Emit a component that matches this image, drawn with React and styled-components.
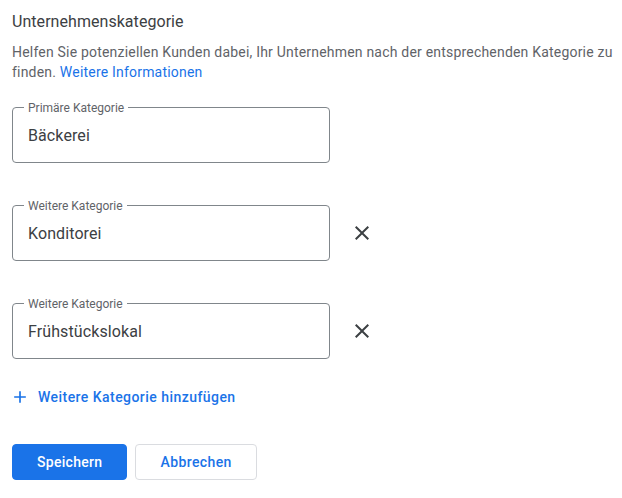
import React, { useState } from "react";
import styled, { createGlobalStyle } from "styled-components";

const GlobalStyle = createGlobalStyle`
  body {
    margin: 0;
    background: #fff;
    font-family: Roboto, "Liberation Sans", Arial, sans-serif;
  }
`;

const Page = styled.div`
  padding: 10px 4px 0 12px;
  color: #3c4043;
`;

const Title = styled.h2`
  margin: 0;
  font-size: 16px;
  line-height: 24px;
  font-weight: 400;
  letter-spacing: 0.05px;
  color: #3c4043;
`;

const Description = styled.p`
  margin: 8px 0 0;
  font-size: 14px;
  line-height: 20px;
  letter-spacing: 0.2px;
  color: #5f6368;

  a {
    color: #1a73e8;
    text-decoration: none;
  }
`;

const FieldList = styled.div`
  display: flex;
  flex-direction: column;
  gap: 42px;
  margin-top: 25px;
`;

const Row = styled.div`
  display: flex;
  align-items: center;
  gap: 20px;
`;

const Field = styled.div`
  position: relative;
  box-sizing: border-box;
  width: 318px;
  height: 56px;
  padding: 0 15px;
  display: flex;
  align-items: center;
  border: 1px solid #80868b;
  border-radius: 4px;
  font-size: 16px;
  letter-spacing: 0.1px;
  color: #3c4043;
`;

const FieldLabel = styled.span`
  position: absolute;
  top: -8px;
  left: 11px;
  padding: 0 4px;
  background: #fff;
  font-size: 12px;
  line-height: 16px;
  letter-spacing: 0;
  color: #5f6368;
`;

const RemoveButton = styled.button`
  width: 24px;
  height: 24px;
  padding: 0;
  border: none;
  background: none;
  display: flex;
  align-items: center;
  justify-content: center;
  color: #3c4043;
  cursor: pointer;
`;

const AddLink = styled.button`
  margin-top: 28px;
  margin-left: -2px;
  padding: 0;
  border: none;
  background: none;
  display: flex;
  align-items: center;
  gap: 8px;
  font-family: inherit;
  font-size: 14px;
  line-height: 20px;
  font-weight: 500;
  letter-spacing: 0.45px;
  color: #1a73e8;
  cursor: pointer;
`;

const Actions = styled.div`
  display: flex;
  gap: 8px;
  margin-top: 37px;
`;

const Button = styled.button`
  box-sizing: border-box;
  height: 36px;
  padding: 0 24px;
  border-radius: 4px;
  font-family: inherit;
  font-size: 14px;
  font-weight: 500;
  letter-spacing: ${(p) => (p.$primary ? "0.3px" : "0.4px")};
  cursor: pointer;
  border: 1px solid ${(p) => (p.$primary ? "#1a73e8" : "#dadce0")};
  background: ${(p) => (p.$primary ? "#1a73e8" : "#fff")};
  color: ${(p) => (p.$primary ? "#fff" : "#1a73e8")};
`;

const CloseIcon = () => (
  <svg width="24" height="24" viewBox="0 0 24 24" fill="currentColor">
    <path d="M19 6.41L17.59 5 12 10.59 6.41 5 5 6.41 10.59 12 5 17.59 6.41 19 12 13.41 17.59 19 19 17.59 13.41 12z" />
  </svg>
);

const AddIcon = () => (
  <svg width="20" height="20" viewBox="0 0 24 24" fill="currentColor">
    <path d="M19 13h-6v6h-2v-6H5v-2h6V5h2v6h6v2z" />
  </svg>
);

const App = () => {
  const [extra, setExtra] = useState(["Konditorei", "Frühstückslokal"]);

  return (
    <>
      <GlobalStyle />
      <Page>
        <Title>Unternehmenskategorie</Title>
        <Description>
          Helfen Sie potenziellen Kunden dabei, Ihr Unternehmen nach der
          entsprechenden Kategorie zu finden.{" "}
          <a href="#">Weitere Informationen</a>
        </Description>

        <FieldList>
          <Row>
            <Field>
              <FieldLabel>Primäre Kategorie</FieldLabel>
              Bäckerei
            </Field>
          </Row>
          {extra.map((name, i) => (
            <Row key={name}>
              <Field>
                <FieldLabel>Weitere Kategorie</FieldLabel>
                {name}
              </Field>
              <RemoveButton
                aria-label="Entfernen"
                onClick={() => setExtra(extra.filter((_, j) => j !== i))}
              >
                <CloseIcon />
              </RemoveButton>
            </Row>
          ))}
        </FieldList>

        <AddLink>
          <AddIcon />
          Weitere Kategorie hinzufügen
        </AddLink>

        <Actions>
          <Button $primary>Speichern</Button>
          <Button>Abbrechen</Button>
        </Actions>
      </Page>
    </>
  );
};

export default App;
